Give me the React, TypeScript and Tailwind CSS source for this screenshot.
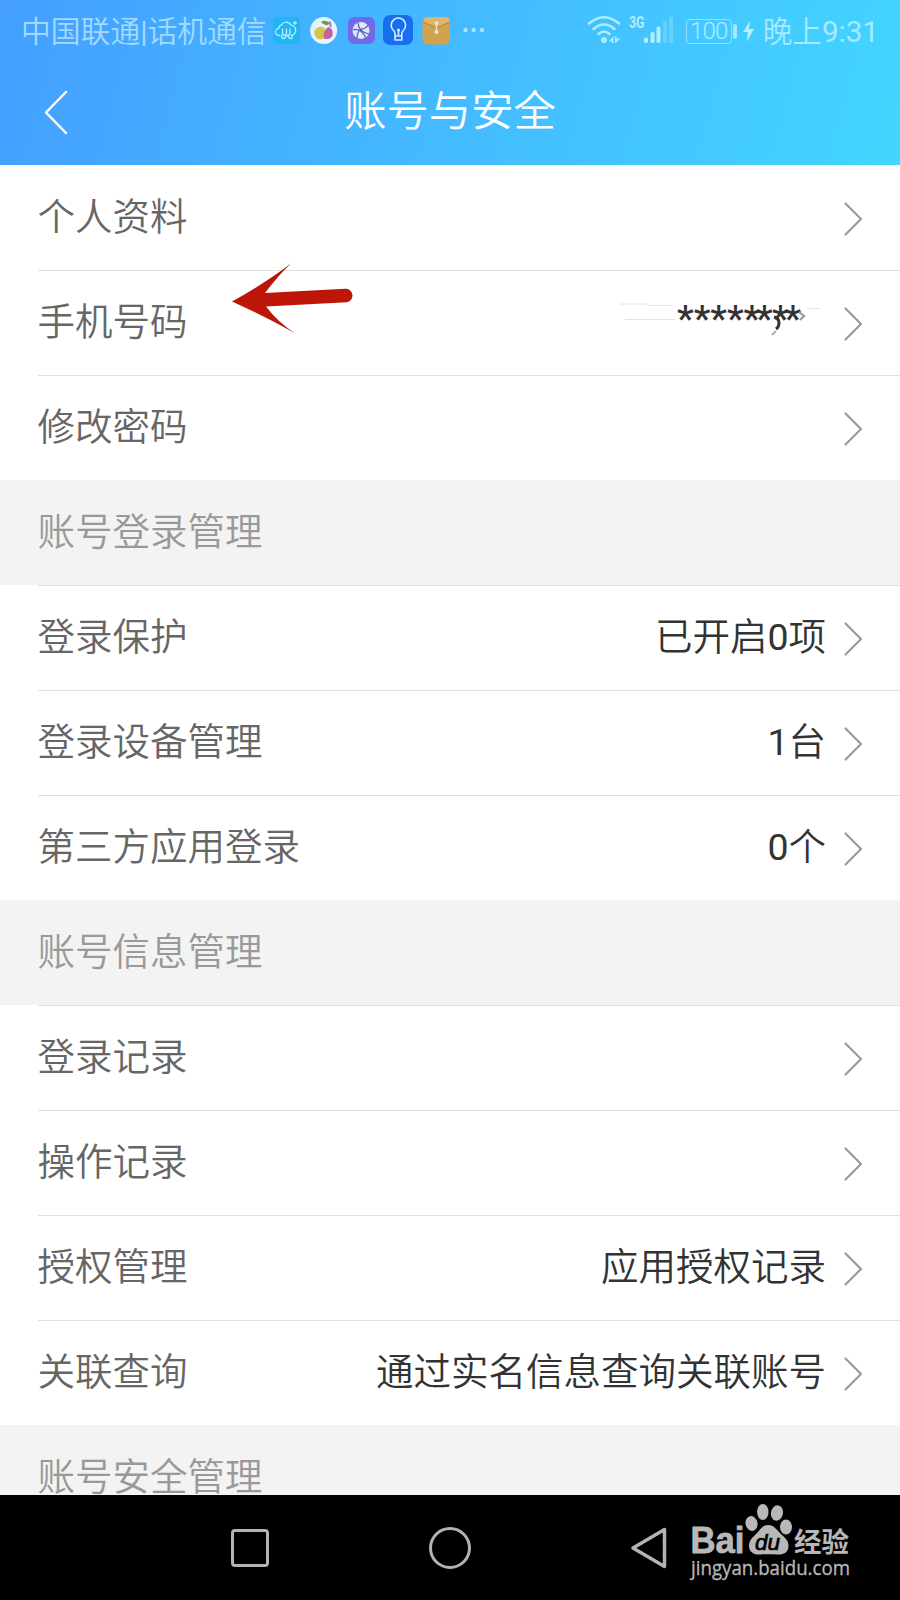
import type { ReactNode } from "react";

const fontStack = "font-['Roboto','Noto_Sans_CJK_SC',sans-serif]";

function Chevron() {
  return (
    <svg className="mt-[1px] h-9 w-5 shrink-0" viewBox="0 0 20 36" fill="none" stroke="#9b9b9b" strokeWidth="2.2" strokeLinecap="round" strokeLinejoin="round">
      <path d="M2.500 2.500 18 18 2.500 33.500" />
    </svg>
  );
}

function Row({ label, value, first }: { label: string; value?: ReactNode; first?: boolean }) {
  return (
    <div className="h-[105px] shrink-0 bg-white pl-[37.5px]">
      <div className={`flex h-full items-center border-t pr-[37px] ${first ? "border-transparent" : "border-[#dfdfdf]"}`}>
        <span className="pb-0.5 text-[#666666]">{label}</span>
        <span className="ml-auto mr-[17px] pb-0.5 text-[#333333]">{value}</span>
        <Chevron />
      </div>
    </div>
  );
}

function Section({ title, last }: { title: string; last?: boolean }) {
  return (
    <div className={`shrink-0 bg-[#f3f3f3] pl-[37.5px] pt-[34px] leading-9 text-[#999999] ${last ? "h-[70px]" : "h-[105px]"}`}>
      {title}
    </div>
  );
}

function StatusIcons() {
  return (
    <svg className="absolute left-[270px] top-[14px] h-[34px] w-[216px] shrink-0" viewBox="270 14 216 34" fill="none">
      <rect x="273" y="17" width="27" height="27" rx="5" fill="#20b5f4" />
      <g stroke="#b5e9fc" strokeWidth="1.3" strokeLinecap="round" strokeLinejoin="round">
        <path d="M280 35.500h-1a3.500 3.500 0 0 1-.3-7 4 4 0 0 1 3-3.700 5.500 5.500 0 0 1 9.600.5 4.500 4.500 0 0 1 1 .2 5 5 0 0 1 2.500 7.700q-1 2-3.800 2.300" />
        <path d="M282.500 29v3.500q0 2.500 2 2.500t2-2.500V29m3.500 0v3.500q0 2.500-2 2.500M282 35q-1 3.500 1.500 3.500 2 0 2-2.500h3q0 2.500 2 2.500 2.500 0 1.500-3.500" />
        <path d="M295 21.500v3m-1.500-1.500h3" />
      </g>
      <circle cx="323.700" cy="30.500" r="13.500" fill="#e4f4f8" />
      <circle cx="320.500" cy="33" r="6.300" fill="#d4c54c" />
      <path d="M328 27c4 1 5 4 4.700 7-.3 4-4 5.500-8 5-2.500-3-1-7 3.300-12Z" fill="#b65bd3" />
      <circle cx="327.300" cy="33.500" r="3.300" fill="#d8646d" />
      <path d="M321 22q5-3 9 1.500-4 4-9-1.500Z" fill="#799345" />
      <path d="M329 22q2 1 1.500 5" stroke="#a57ac6" strokeWidth="2" />
      <rect x="348" y="17" width="27" height="27" rx="6" fill="#7069e8" />
      <circle cx="361" cy="30.500" r="8.500" fill="#dbe9fb" />
      <path d="M358 22.500q0 9 11 11.500M353 30q7-3 13 8M361 29q-4 3-4 9M361 29q5 0 7-4" stroke="#6259b8" strokeWidth="1.200" />
      <rect x="383" y="15" width="30" height="30" rx="7" fill="#176ff0" />
      <path d="M395 36v-2.500q0-1.500-1.700-3.200a7.200 7.200 0 1 1 10.200 0q-1.700 1.700-1.700 3.200V40H395v-4h6.800M398.500 35v-5" stroke="#d5edff" strokeWidth="1.600" strokeLinejoin="round" />
      <circle cx="398.500" cy="30" r="1.500" fill="#d5edff" />
      <rect x="422.500" y="17" width="27.500" height="27.500" rx="5" fill="#d1a34f" />
      <path d="M423 21q1-4 5-4h17q4 0 5 4l-13 6Z" fill="#ddb66b" />
      <path d="m423 22 13.500 6L450 22" stroke="#b58c49" />
      <path d="M436.500 23v9" stroke="#e5eadb" strokeWidth="1.300" />
      <circle cx="436.500" cy="23" r="1.800" fill="#e5eadb" />
      <circle cx="436.500" cy="32" r="2" fill="#e5eadb" />
      <g fill="#a6e5ff"><circle cx="465.500" cy="30" r="2.200" /><circle cx="473.700" cy="30" r="2.200" /><circle cx="482" cy="30" r="2.200" /></g>
    </svg>
  );
}

function SystemIcons() {
  return (
    <div className="ml-auto flex items-center">
      <svg className="-mt-px h-[34px] w-[90px] shrink-0" viewBox="586 14 90 34" fill="none">
        <g stroke="#b0edff" strokeWidth="2.500" strokeLinecap="round">
          <path d="M590 23.500q15-12.500 30 0M594.500 29q10.500-9 21 0M599.500 34q5.500-5 11 0" />
        </g>
        <circle cx="605" cy="40" r="3" fill="#b0edff" />
        <path d="M610 41.500 614.500 36v7h-1.500v-1.500Zm6-5h1.500v2h4l-5.500 5Z" fill="#b0edff" />
        <text x="630" y="28" fill="#b0edff" fontSize="16" fontWeight="700" textLength="15.500" lengthAdjust="spacingAndGlyphs">3G</text>
        <g fill="#b0edff">
          <rect x="645" y="37.500" width="4" height="5.500" rx="1.500" />
          <rect x="651.500" y="32" width="4" height="11" rx="1.500" />
          <rect x="657.500" y="26.500" width="4" height="16.500" rx="1.500" />
          <rect x="664" y="21" width="4" height="22" rx="1.500" opacity=".3" />
          <rect x="670" y="16" width="4" height="27" rx="1.500" opacity=".3" />
        </g>
      </svg>
      <span className="-mt-px ml-[11px] flex h-[25px] w-[46px] items-center justify-center rounded border-[1.5px] border-[#8fe2ff] text-[24px] font-light leading-none tracking-[-0.8px] text-[#b0edff]">100</span>
      <span className="-mt-px ml-px h-[15px] w-[4px] rounded-sm bg-[#a7eaff]" />
      <svg className="-mt-px ml-[6px] h-6 w-[11px]" viewBox="0 0 11 24"><path d="M7 2 0 13h5L3.500 23 11 10H6Z" fill="#b5f0ff" /></svg>
      <span className="ml-[9px] whitespace-nowrap text-[29.6px] leading-[34px] text-[#a7eaff]">晚上<span className="font-normal">9:31</span></span>
    </div>
  );
}

function MaskedNumber() {
  return (
    <span className="relative flex w-[149px] items-center pb-1 font-medium">
      <span className="-mt-[5px]">****</span>
      <span className="-mt-[5px] tracking-[-4.200px]">*</span>
      <span className="-mt-[5px] tracking-[-0.600px]">*</span>
      <span className="-mt-[5px] tracking-[-4.200px]">*</span>
      <span className="-mt-[5px]">*</span>
      <svg className="absolute -left-[57px] -top-[3px] h-[50px] w-[210px]" viewBox="620 298 210 50" fill="none">
        <path d="M620 307h27l1 1.500h24M625 322.500h50M807 311.500h13" stroke="#e4e4e4" />
        <path d="M774 320q5 1 5 6 0 4-3 6" stroke="#333" strokeWidth="3" />
        <path d="m776 334-4 4" stroke="#aaa" strokeWidth="2" />
        <path d="m799 315 5 4-4 4" stroke="#999" strokeWidth="2.200" />
      </svg>
    </span>
  );
}

function Watermark() {
  return (
    <svg className="absolute left-[688px] top-[1500px] h-[84px] w-[170px]" viewBox="688 1500 170 84" fill="#b8b8b8">
      <text x="690.500" y="1553" fontFamily="Liberation Sans" fontWeight="700" fontSize="36" stroke="#b8b8b8" strokeWidth=".8" textLength="54" lengthAdjust="spacingAndGlyphs">Bai</text>
      <ellipse cx="751.500" cy="1523.500" rx="6" ry="7.500" transform="rotate(-12 751.500 1523.500)" />
      <ellipse cx="762.800" cy="1512" rx="5.700" ry="8" />
      <ellipse cx="777" cy="1513" rx="6" ry="7.700" transform="rotate(12 777 1513)" />
      <ellipse cx="786" cy="1527" rx="6" ry="7.500" />
      <path d="M768 1525c6 0 9 5 12 8 5 5 8.500 7 8.500 13 0 7-6 9-11 8.500-6-.5-12-.5-17 0-7 .5-11.500-3-11.500-8.500 0-6 4-9 8-13 3-3 5-8 11-8Z" />
      <text x="755" y="1550" fill="#000" fontFamily="Liberation Sans" fontStyle="italic" fontWeight="400" fontSize="22" stroke="#000" strokeWidth=".7" textLength="25" lengthAdjust="spacingAndGlyphs">du</text>
      <text x="794" y="1551.500" fontFamily="Noto Sans CJK SC" fontWeight="700" fontSize="27" textLength="55" lengthAdjust="spacingAndGlyphs">经验</text>
      <text x="691" y="1575" fontFamily="Open Sans" fontWeight="500" fontSize="20" stroke="#b8b8b8" strokeWidth=".3" textLength="159" lengthAdjust="spacingAndGlyphs">jingyan.baidu.com</text>
    </svg>
  );
}

export default function App() {
  return (
    <div className={`relative flex h-[1600px] w-[900px] flex-col overflow-hidden bg-white text-[37.5px] font-[350] leading-[50px] ${fontStack}`}>
      <header className="h-[165px] shrink-0 bg-[linear-gradient(105deg,#449fff_0%,#43d5ff_100%)]">
        <div className="flex h-[60px] items-center pl-[21px] pr-[21px] pt-[3px]">
          <span className="whitespace-nowrap text-[29.8px] leading-[34px] text-[#a3daff]">中国联通<span className="font-normal">|</span>话机通信</span>
          <StatusIcons />
          <SystemIcons />
        </div>
        <div className="grid h-[104px] grid-cols-[100px_1fr_100px] items-center text-white">
          <svg className="ml-[43px] h-12 w-7" viewBox="0 0 28 48" fill="none" stroke="white" strokeWidth="2.500" strokeLinecap="round" strokeLinejoin="round"><path d="M23 4 3 24.500 23 45" /></svg>
          <h1 className="text-center text-[42.300px] font-[350]">账号与安全</h1>
        </div>
      </header>
      <main className="flex h-[1330px] shrink-0 flex-col">
        <Row label="个人资料" first />
        <Row label="手机号码" value={<MaskedNumber />} />
        <Row label="修改密码" />
        <Section title="账号登录管理" />
        <Row label="登录保护" value={<>已开启<span className="font-normal">0</span>项</>} />
        <Row label="登录设备管理" value={<><span className="font-normal">1</span>台</>} />
        <Row label="第三方应用登录" value={<><span className="font-normal">0</span>个</>} />
        <Section title="账号信息管理" />
        <Row label="登录记录" />
        <Row label="操作记录" />
        <Row label="授权管理" value="应用授权记录" />
        <Row label="关联查询" value="通过实名信息查询关联账号" />
        <Section title="账号安全管理" last />
      </main>
      <nav className="flex h-[105px] items-center bg-black pl-[231px]">
        <span className="h-[38px] w-[38px] rounded border-[3.5px] border-[#b3b3b3]" />
        <span className="ml-[160px] h-[42px] w-[42px] rounded-full border-[3.5px] border-[#b3b3b3]" />
        <svg className="ml-[158px] h-[44px] w-[40px]" viewBox="0 0 40 44" fill="none" stroke="#b3b3b3" strokeWidth="3.500" strokeLinejoin="round"><path d="M4 22 35.500 3.500v37Z" /></svg>
      </nav>
      <svg className="absolute left-[230px] top-[260px] h-[76px] w-[125px]" viewBox="230 260 125 76" fill="#bd1609">
        <path d="M232 301.500Q267 282 291.500 263q-12 11-26.500 30l80-4.200a6.600 6.600 0 0 1 1.500 13.400L266 306.500q12 16 29.500 27Q266 317 232 301.500Z" />
      </svg>
      <Watermark />
    </div>
  );
}
